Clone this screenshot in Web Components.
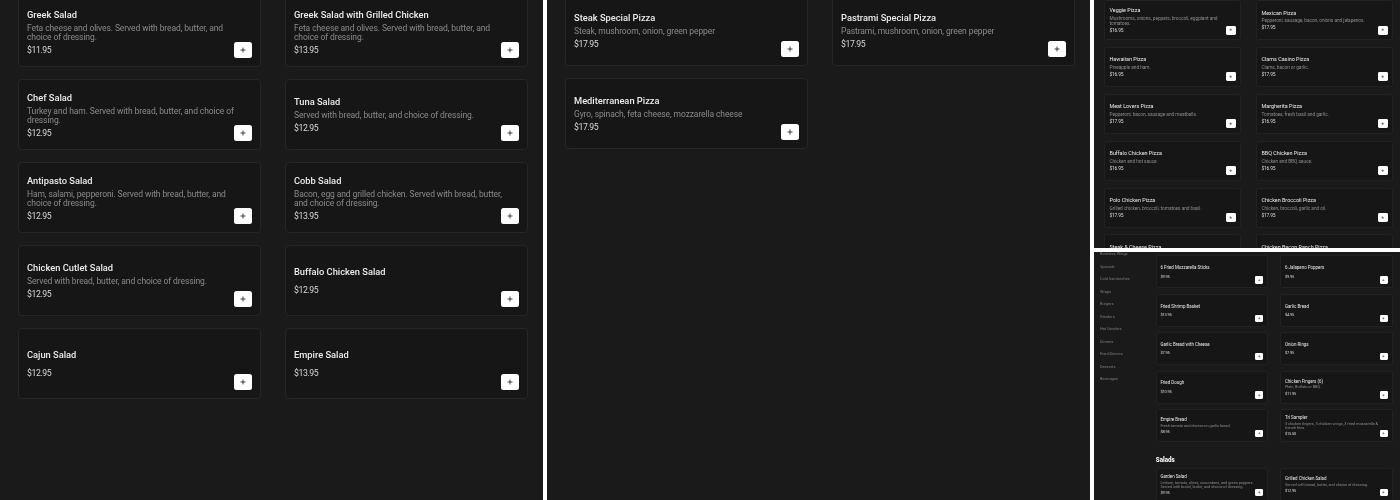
<!DOCTYPE html>
<html>
<head>
<meta charset="utf-8">
<style>
  html, body { margin: 0; height: 500px; overflow: hidden; background: #fff; }
  body { font-family: Roboto, "Liberation Sans", sans-serif; }
  card-grid.small { --line: #222; --name-weight: 400; --name-size: 9.6; }
</style>
</head>
<body>
<shot-board>
  <menu-panel>
    <card-grid style="--u:1px; --w:243; --gap-x:24; --gap-y:12; --top:-4; --left:18">
      <menu-card name="Greek Salad" price="$11.95">Feta cheese and olives. Served with bread, butter, and choice of dressing.</menu-card>
      <menu-card name="Greek Salad with Grilled Chicken" price="$13.95">Feta cheese and olives. Served with bread, butter, and choice of dressing.</menu-card>
      <menu-card name="Chef Salad" price="$12.95">Turkey and ham. Served with bread, butter, and choice of dressing.</menu-card>
      <menu-card name="Tuna Salad" price="$12.95">Served with bread, butter, and choice of dressing.</menu-card>
      <menu-card name="Antipasto Salad" price="$12.95">Ham, salami, pepperoni. Served with bread, butter, and choice of dressing.</menu-card>
      <menu-card name="Cobb Salad" price="$13.95">Bacon, egg and grilled chicken. Served with bread, butter, and choice of dressing.</menu-card>
      <menu-card name="Chicken Cutlet Salad" price="$12.95">Served with bread, butter, and choice of dressing.</menu-card>
      <menu-card name="Buffalo Chicken Salad" price="$12.95"></menu-card>
      <menu-card name="Cajun Salad" price="$12.95"></menu-card>
      <menu-card name="Empire Salad" price="$13.95"></menu-card>
    </card-grid>
  </menu-panel>

  <menu-panel>
    <card-grid style="--u:1px; --w:243; --gap-x:24; --gap-y:12; --top:-5; --left:18">
      <menu-card name="Steak Special Pizza" price="$17.95">Steak, mushroom, onion, green pepper</menu-card>
      <menu-card name="Pastrami Special Pizza" price="$17.95">Pastrami, mushroom, onion, green pepper</menu-card>
      <menu-card name="Mediterranean Pizza" price="$17.95">Gyro, spinach, feta cheese, mozzarella cheese</menu-card>
    </card-grid>
  </menu-panel>

  <split-column>
    <menu-panel>
      <card-grid class="small" style="--u:.565px; --w:243; --gap-x:26; --gap-y:12; --top:0; --left:17.7">
        <menu-card name="Veggie Pizza" price="$16.95">Mushrooms, onions, peppers, broccoli, eggplant and tomatoes.</menu-card>
        <menu-card name="Mexican Pizza" price="$17.95">Pepperoni, sausage, bacon, onions and jalapenos.</menu-card>
        <menu-card name="Hawaiian Pizza" price="$16.95">Pineapple and ham.</menu-card>
        <menu-card name="Clams Casino Pizza" price="$17.95">Clams, bacon or garlic.</menu-card>
        <menu-card name="Meat Lovers Pizza" price="$17.95">Pepperoni, bacon, sausage and meatballs.</menu-card>
        <menu-card name="Margherita Pizza" price="$16.95">Tomatoes, fresh basil and garlic.</menu-card>
        <menu-card name="Buffalo Chicken Pizza" price="$16.95">Chicken and hot sauce.</menu-card>
        <menu-card name="BBQ Chicken Pizza" price="$16.95">Chicken and BBQ sauce.</menu-card>
        <menu-card name="Polo Chicken Pizza" price="$17.95">Grilled chicken, broccoli, tomatoes and basil.</menu-card>
        <menu-card name="Chicken Broccoli Pizza" price="$17.95">Chicken, broccoli, garlic and oil.</menu-card>
        <menu-card name="Steak &amp; Cheese Pizza" price="$17.95">&nbsp;</menu-card>
        <menu-card name="Chicken Bacon Ranch Pizza" price="$17.95">&nbsp;</menu-card>
      </card-grid>
    </menu-panel>

    <menu-panel class="with-nav">
      <nav-list>
        <span>Boneless Wings</span>
        <span>Specials</span>
        <span>Cold Sandwiches</span>
        <span>Wraps</span>
        <span>Burgers</span>
        <span>Grinders</span>
        <span>Hot Grinders</span>
        <span>Dinners</span>
        <span>Fried Dinners</span>
        <span>Desserts</span>
        <span>Beverages</span>
      </nav-list>
      <menu-column>
        <card-grid class="small" style="--u:.463px; --w:243; --gap-x:26; --gap-y:12; --top:7.5; --left:0">
          <menu-card name="6 Fried Mozzarella Sticks" price="$9.95"></menu-card>
          <menu-card name="6 Jalapeno Poppers" price="$9.95"></menu-card>
          <menu-card name="Fried Shrimp Basket" price="$13.95"></menu-card>
          <menu-card name="Garlic Bread" price="$4.95"></menu-card>
          <menu-card name="Garlic Bread with Cheese" price="$7.95"></menu-card>
          <menu-card name="Onion Rings" price="$7.95"></menu-card>
          <menu-card name="Fried Dough" price="$10.95"></menu-card>
          <menu-card name="Chicken Fingers (6)" price="$11.95">Plain, Buffalo or BBQ.</menu-card>
          <menu-card name="Empire Bread" price="$8.95">Fresh tomato and cheese on garlic bread.</menu-card>
          <menu-card name="Tri Sampler" price="$15.50">3 chicken fingers, 3 chicken wings, 3 fried mozzarella &amp; french fries.</menu-card>
        </card-grid>
        <section-title>Salads</section-title>
        <card-grid class="small" style="--u:.463px; --w:243; --gap-x:26; --gap-y:12; --top:0; --left:0">
          <menu-card name="Garden Salad" price="$9.95">Lettuce, tomato, olives, cucumbers, and green peppers. Served with bread, butter, and choice of dressing.</menu-card>
          <menu-card name="Grilled Chicken Salad" price="$12.95">Served with bread, butter, and choice of dressing.</menu-card>
        </card-grid>
      </menu-column>
    </menu-panel>
  </split-column>
</shot-board>

<script>
class ShotBoard extends HTMLElement {
  constructor() {
    super();
    this.attachShadow({ mode: 'open' }).innerHTML = `
      <style>
        :host {
          display: grid;
          grid-template-columns: 543px 543px 306px;
          column-gap: 4px;
          height: 500px;
          background: #fff;
        }
      </style>
      <slot></slot>`;
  }
}

class SplitColumn extends HTMLElement {
  constructor() {
    super();
    this.attachShadow({ mode: 'open' }).innerHTML = `
      <style>
        :host {
          display: grid;
          grid-template-rows: 248px 248px;
          row-gap: 4px;
          min-width: 0;
        }
      </style>
      <slot></slot>`;
  }
}

class MenuPanel extends HTMLElement {
  constructor() {
    super();
    this.attachShadow({ mode: 'open' }).innerHTML = `
      <style>
        :host {
          display: block;
          background: #1a1a1a;
          overflow: hidden;
          min-height: 0;
        }
        :host(.with-nav) {
          display: flex;
        }
      </style>
      <slot></slot>`;
  }
}

class CardGrid extends HTMLElement {
  constructor() {
    super();
    this.attachShadow({ mode: 'open' }).innerHTML = `
      <style>
        :host {
          display: grid;
          grid-template-columns: repeat(2, calc(var(--u) * var(--w)));
          grid-auto-rows: calc(var(--u) * 71);
          column-gap: calc(var(--u) * var(--gap-x));
          row-gap: calc(var(--u) * var(--gap-y));
          margin-top: calc(var(--u) * var(--top));
          margin-left: calc(var(--u) * var(--left));
        }
      </style>
      <slot></slot>`;
  }
}

class MenuCard extends HTMLElement {
  constructor() {
    super();
    this.attachShadow({ mode: 'open' }).innerHTML = `
      <style>
        :host {
          display: flex;
          box-sizing: border-box;
          min-width: 0;
          padding: 0 calc(var(--u) * 8) calc(var(--u) * 8) calc(var(--u) * 8);
          background: #161616;
          border: calc(var(--u) * 1) solid var(--line, #262626);
          border-radius: calc(var(--u) * 4);
        }
        .body {
          flex: 1;
          min-width: 0;
          align-self: stretch;
          display: flex;
          flex-direction: column;
          justify-content: center;
          margin-bottom: calc(var(--u) * -9);
          will-change: opacity;
        }
        .name {
          font-size: calc(var(--u) * var(--name-size, 9.3));
          line-height: calc(var(--u) * 12);
          font-weight: var(--name-weight, 500);
          color: #ececec;
        }
        .desc {
          margin: calc(var(--u) * 3) 0 calc(var(--u) * 2);
          font-size: calc(var(--u) * 8.5);
          letter-spacing: calc(var(--u) * -0.1);
          line-height: calc(var(--u) * 9);
          color: #8a8a8a;
        }
        :host(:empty) .desc {
          margin-bottom: calc(var(--u) * 3);
        }
        .price {
          font-size: calc(var(--u) * 8.7);
          letter-spacing: calc(var(--u) * -0.4);
          line-height: calc(var(--u) * 12);
          color: #d8d8d8;
        }
        button {
          flex: none;
          align-self: flex-end;
          display: grid;
          place-items: center;
          width: calc(var(--u) * 18);
          height: calc(var(--u) * 16);
          margin-left: calc(var(--u) * -3);
          padding: 0;
          border: 0;
          border-radius: calc(var(--u) * 2.5);
          background: #fff;
        }
        svg {
          width: calc(var(--u) * 6);
          height: calc(var(--u) * 6);
          display: block;
        }
      </style>
      <div class="body">
        <div class="name"></div>
        <div class="desc"><slot></slot></div>
        <div class="price"></div>
      </div>
      <button aria-label="Add">
        <svg viewBox="0 0 12 12"><path d="M6 1v10M1 6h10" stroke="#222" stroke-width="1.7" fill="none"/></svg>
      </button>`;
  }

  connectedCallback() {
    this.shadowRoot.querySelector('.name').textContent = this.getAttribute('name');
    this.shadowRoot.querySelector('.price').textContent = this.getAttribute('price');
  }
}

class NavList extends HTMLElement {
  constructor() {
    super();
    this.attachShadow({ mode: 'open' }).innerHTML = `
      <style>
        :host {
          flex: none;
          box-sizing: border-box;
          width: 61.7px;
          padding-left: 6px;
          margin-top: -4px;
          display: flex;
          flex-direction: column;
          font-size: 3.9px;
          line-height: 12.55px;
          color: #7c7c7c;
          will-change: opacity;
        }
        ::slotted(span) {
          display: block;
          white-space: nowrap;
        }
      </style>
      <slot></slot>`;
  }
}

class MenuColumn extends HTMLElement {
  constructor() {
    super();
    this.attachShadow({ mode: 'open' }).innerHTML = `
      <style>
        :host {
          display: block;
          flex: 1;
          min-width: 0;
        }
      </style>
      <slot></slot>`;
  }
}

class SectionTitle extends HTMLElement {
  constructor() {
    super();
    this.attachShadow({ mode: 'open' }).innerHTML = `
      <style>
        :host {
          display: block;
          margin: 14.5px 0 2.5px;
          font-size: 6.3px;
          line-height: 9px;
          font-weight: 900;
          color: #f2f2f2;
          will-change: opacity;
        }
      </style>
      <slot></slot>`;
  }
}

customElements.define('shot-board', ShotBoard);
customElements.define('split-column', SplitColumn);
customElements.define('menu-panel', MenuPanel);
customElements.define('card-grid', CardGrid);
customElements.define('menu-card', MenuCard);
customElements.define('nav-list', NavList);
customElements.define('menu-column', MenuColumn);
customElements.define('section-title', SectionTitle);
</script>
</body>
</html>
